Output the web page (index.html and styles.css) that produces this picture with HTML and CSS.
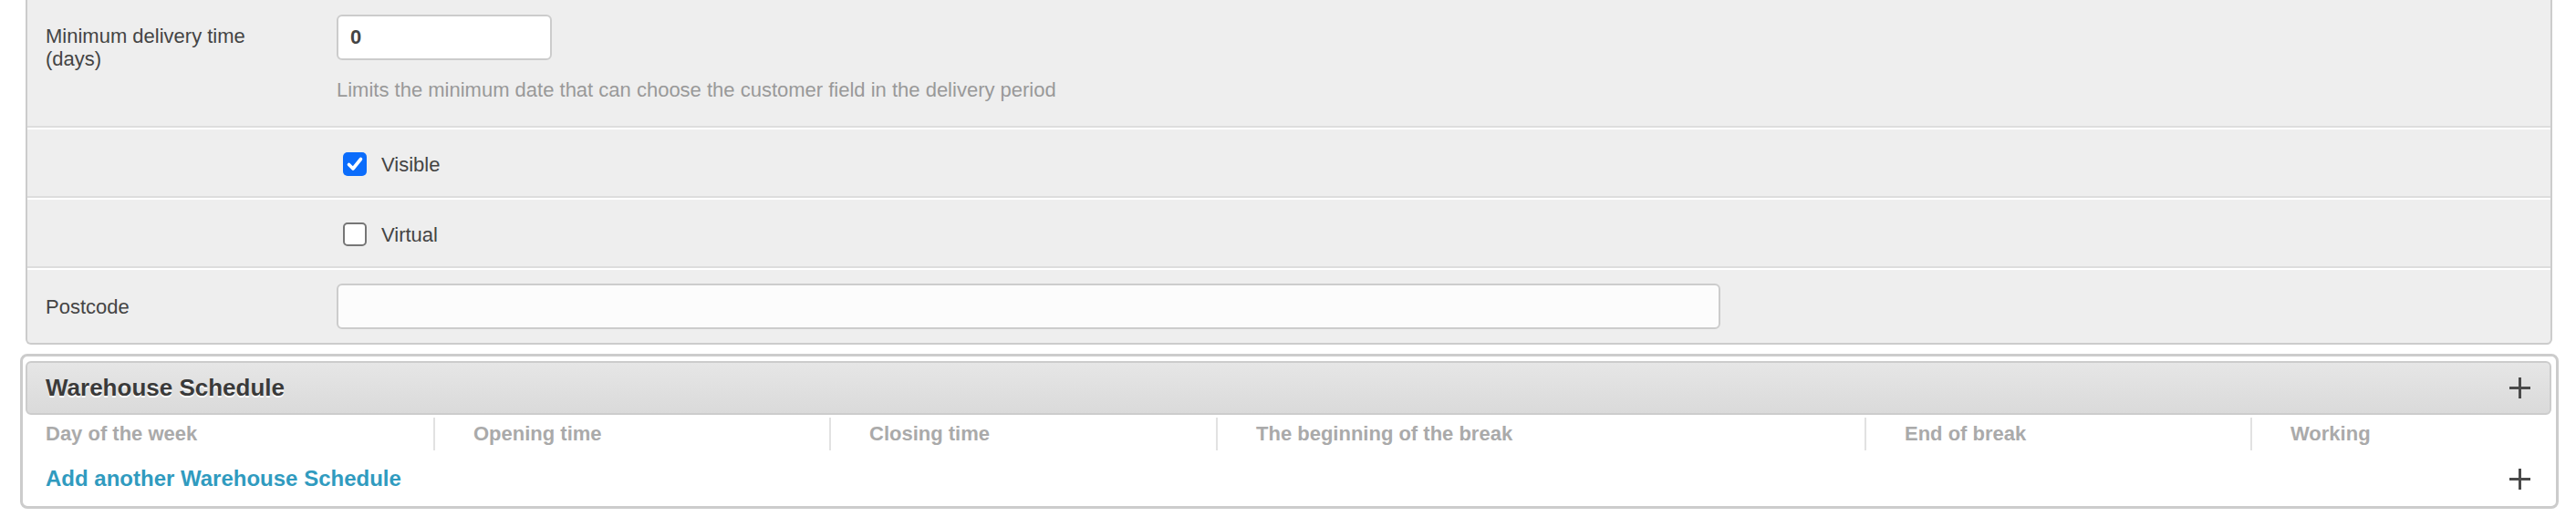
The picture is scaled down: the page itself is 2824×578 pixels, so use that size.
FILE: index.html
```html
<!DOCTYPE html>
<html lang="en">
<head>
<meta charset="utf-8">
<title>Warehouse</title>
<link rel="stylesheet" href="styles.css">
</head>
<body>
<div class="page">
  <div class="fieldset">
    <div class="row row-first">
      <div class="label label-top">Minimum delivery time (days)</div>
      <div class="field">
        <input class="input input-short" type="text" value="0">
        <p class="help">Limits the minimum date that can choose the customer field in the delivery period</p>
      </div>
    </div>
    <div class="row row-check">
      <div class="label"></div>
      <div class="field">
        <label class="check">
          <span class="box box-on"><svg width="26" height="26" viewBox="0 0 26 26"><path d="M6.5 13.5 L11 18 L19.5 7.5" fill="none" stroke="#fff" stroke-width="3.6" stroke-linecap="round" stroke-linejoin="round"/></svg></span>
          <span class="check-text">Visible</span>
        </label>
      </div>
    </div>
    <div class="row row-check">
      <div class="label"></div>
      <div class="field">
        <label class="check">
          <span class="box box-off"></span>
          <span class="check-text">Virtual</span>
        </label>
      </div>
    </div>
    <div class="row row-last">
      <div class="label">Postcode</div>
      <div class="field">
        <input class="input input-long" type="text" value="">
      </div>
    </div>
  </div>

  <div class="inline-group">
    <div class="inline-header">
      <h2 class="inline-title">Warehouse Schedule</h2>
      <span class="plus"><svg width="25" height="25" viewBox="0 0 25 25"><path d="M12.5 1 V24 M1 12.5 H24" stroke="#4a4a4a" stroke-width="3" fill="none"/></svg></span>
    </div>
    <div class="tab-head">
      <div class="th th-first">Day of the week</div>
      <div class="th">Opening time</div>
      <div class="th">Closing time</div>
      <div class="th">The beginning of the break</div>
      <div class="th">End of break</div>
      <div class="th">Working</div>
    </div>
    <div class="add-row">
      <a class="add-link" href="#">Add another Warehouse Schedule</a>
      <span class="plus"><svg width="25" height="25" viewBox="0 0 25 25"><path d="M12.5 1 V24 M1 12.5 H24" stroke="#4a4a4a" stroke-width="3" fill="none"/></svg></span>
    </div>
  </div>
</div>
</body>
</html>
```

FILE: styles.css
```css
html, body {
  margin: 0;
  padding: 0;
  background: #fff;
}

body {
  font-family: "Liberation Sans", Arial, sans-serif;
  font-size: 22px;
  color: #444;
}

.page {
  padding: 0 26px 0 28px;
}

.fieldset {
  background: #eee;
  border: 2px solid #ccc;
  border-top: none;
  border-radius: 0 0 6px 6px;
}

.row {
  display: flex;
  border-top: 2px solid #fff;
  border-bottom: 2px solid #ddd;
}

.row-first {
  border-top: none;
  padding: 16px 0 25px;
  align-items: flex-start;
}

.row-check {
  padding: 25px 0 22px;
  align-items: flex-start;
}

.row-last {
  border-bottom: none;
  padding: 15px 0;
  align-items: center;
}

.label {
  flex: none;
  width: 339px;
  box-sizing: border-box;
  padding: 0 60px 0 20px;
  line-height: 25px;
}

.label-top {
  margin-top: 11px;
}

.field {
  flex: 1;
  min-width: 0;
}

.input {
  display: block;
  box-sizing: border-box;
  height: 50px;
  border: 2px solid #ccc;
  border-radius: 6px;
  background: #fcfcfc;
  font-family: "Liberation Sans", Arial, sans-serif;
  font-size: 22px;
  font-weight: bold;
  color: #444;
  padding: 0 13px;
  margin: 0;
  outline: none;
}

.input-short {
  width: 236px;
  background: #fff;
}

.input-long {
  width: 1517px;
}

.help {
  margin: 19px 0 0;
  line-height: 28px;
  color: #999;
}

.check {
  display: flex;
  align-items: center;
  margin-left: 7px;
  height: 26px;
}

.box {
  width: 26px;
  height: 26px;
  box-sizing: border-box;
  border-radius: 5px;
  flex: none;
  display: block;
}

.box svg {
  display: block;
}

.box-on {
  background: #0b6cfb;
}

.box-off {
  background: #fff;
  border: 2px solid #767676;
}

.check-text {
  margin-left: 16px;
  line-height: 26px;
  padding-top: 2px;
}

.inline-group {
  margin: 10px -7px 0 -6px;
  border: 3px solid #ccc;
  border-radius: 8px;
  padding: 5px 5px 0 3px;
  background: #fff;
}

.inline-header {
  height: 59px;
  box-sizing: border-box;
  border: 2px solid #ccc;
  border-radius: 6px;
  background: linear-gradient(#e6e6e6, #dadada);
  display: flex;
  align-items: center;
  justify-content: space-between;
  padding: 0 20px 0 20px;
}

.inline-title {
  margin: 0;
  font-size: 26px;
  font-weight: bold;
  color: #3a3a3a;
  text-shadow: 0 2px 0 #fff;
}

.plus {
  display: block;
  width: 25px;
  height: 25px;
}

.plus svg {
  display: block;
}

.tab-head {
  display: grid;
  grid-template-columns: 447px 434px 424px 711px 423px 1fr;
  height: 40px;
}

.th {
  margin-top: 3px;
  height: 36px;
  line-height: 36px;
  font-weight: bold;
  color: #aaa;
  padding-left: 42px;
  border-left: 2px solid #e2e2e2;
  white-space: nowrap;
}

.th-first {
  padding-left: 22px;
  border-left: none;
}

.add-row {
  height: 60px;
  display: flex;
  align-items: center;
  justify-content: space-between;
  padding: 0 22px;
}

.add-link {
  font-size: 24px;
  font-weight: bold;
  color: #309bbf;
  text-decoration: none;
}
```
